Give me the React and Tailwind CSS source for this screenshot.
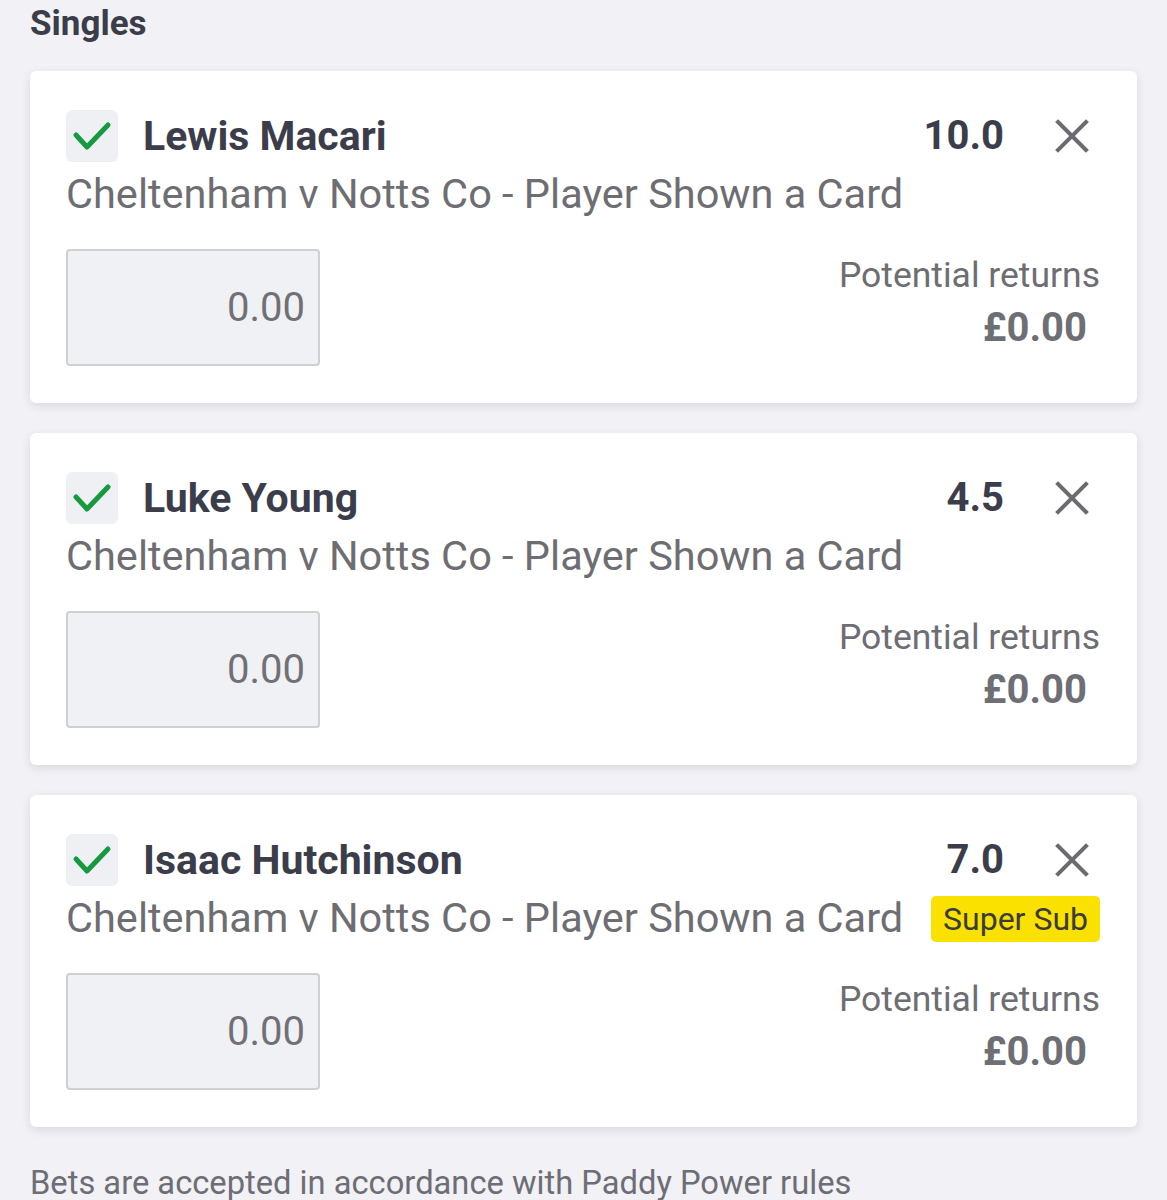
// App.jsx — bet slip singles
const bets = [
  { name: "Lewis Macari", odds: "10.0" },
  { name: "Luke Young", odds: "4.5" },
  { name: "Isaac Hutchinson", odds: "7.0", badge: "Super Sub" },
];

function Check() {
  return (
    <div className="w-[52px] h-[52px] shrink-0 rounded-[6px] bg-[#eff0f4] flex items-center justify-center">
      <svg width="52" height="52" viewBox="0 0 52 52" fill="none">
        <path
          d="M10 25 L21 37 L42 15"
          stroke="#17993f"
          strokeWidth="5"
          strokeLinecap="round"
          strokeLinejoin="round"
        />
      </svg>
    </div>
  );
}

function Close() {
  return (
    <button className="w-[56px] h-[52px] shrink-0 flex items-center justify-center">
      <svg width="34" height="34" viewBox="0 0 34 34" fill="none">
        <path d="M3 3 L31 31 M31 3 L3 31" stroke="#6b6b70" strokeWidth="4" strokeLinecap="square" />
      </svg>
    </button>
  );
}

function BetCard({ bet }) {
  return (
    <div className="bg-white rounded-[6px] shadow-[0_3px_10px_rgba(40,40,60,0.12)] pl-[36px] pr-[37px] pt-[39px] pb-[37px]">
      {/* top row */}
      <div className="flex items-center h-[52px]">
        <Check />
        <span className="ml-[25px] text-[41px] leading-none font-bold text-[#3c3d4a]">{bet.name}</span>
        <span className="ml-auto text-[40px] leading-none font-bold text-[#3c3d4a]">{bet.odds}</span>
        <div className="ml-[40px]">
          <Close />
        </div>
      </div>

      {/* market */}
      <div className="flex items-center justify-between mt-[8px] h-[48px]">
        <span className="text-[41.5px] leading-none text-[#6d6d72]">
          Cheltenham v Notts Co - Player Shown a Card
        </span>
        {bet.badge && (
          <span className="bg-[#fae100] rounded-[5px] px-[12px] h-[46px] mt-[2px] flex items-center text-[32px] text-[#3b3b3b]">
            {bet.badge}
          </span>
        )}
      </div>

      {/* stake + returns */}
      <div className="flex justify-between items-start mt-[31px]">
        <div className="w-[254px] h-[117px] bg-[#f0f1f5] border-2 border-[#d0d0d4] rounded-[4px] flex items-center justify-end pr-[13px]">
          <span className="text-[40px] text-[#707075]">0.00</span>
        </div>
        <div className="flex flex-col items-end pt-[4px]">
          <span className="text-[35.5px] leading-[44px] text-[#6d6d72]">Potential returns</span>
          <span className="mr-[13px] mt-[11px] text-[40px] leading-none font-bold text-[#6e6e75]">£0.00</span>
        </div>
      </div>
    </div>
  );
}

export default function App() {
  return (
    <div className="min-h-[1200px] bg-[#f1f1f6] px-[30px] pt-[3px] font-['Roboto',sans-serif]">
      <h2 className="text-[35px] leading-[42px] font-bold text-[#3c3d4a]">Singles</h2>

      <div className="flex flex-col gap-[30px] mt-[26px]">
        {bets.map((b) => (
          <BetCard key={b.name} bet={b} />
        ))}
      </div>

      <p className="mt-[36px] text-[32.7px] leading-[40px] text-[#6d6d75]">
        Bets are accepted in accordance with Paddy Power rules
      </p>
    </div>
  );
}
